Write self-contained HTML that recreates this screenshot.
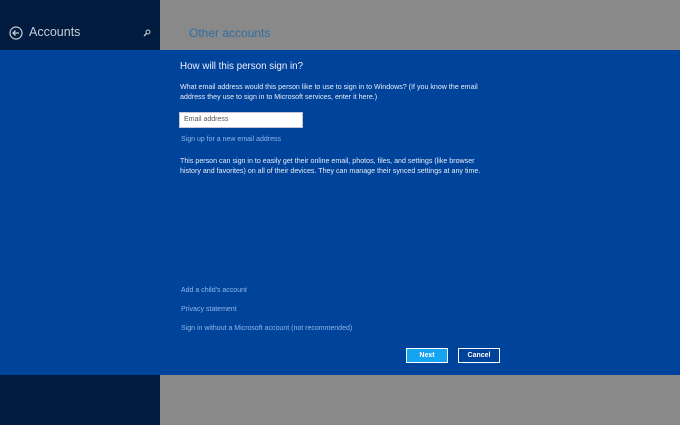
<!DOCTYPE html>
<html><head><style>
*{margin:0;padding:0;box-sizing:border-box}
body{width:680px;height:425px;position:relative;overflow:hidden;background:#898989;font-family:"Liberation Sans",sans-serif}
.nav{position:absolute;left:0;top:0;width:160px;height:425px;background:#011c3e}
.band{position:absolute;left:0;top:50px;width:680px;height:325px;background:#00439a}
.t{position:absolute;white-space:nowrap;color:#fff}
.p{font-size:7.1px;line-height:9.5px;color:#e8eef8}
.l{font-size:7px;color:#8fb6ea}
</style></head><body>
<div class="nav"></div>
<div class="band"></div>
<svg style="position:absolute;left:9px;top:26px" width="14" height="14" viewBox="0 0 14 14"><circle cx="7" cy="7" r="6" fill="none" stroke="#c8ccd4" stroke-width="1.2"/><path d="M10 7H4M6.5 4.5L4 7l2.5 2.5" fill="none" stroke="#c8ccd4" stroke-width="1.3"/></svg>
<div class="t" style="left:29px;top:25px;font-size:12.5px;color:#c8ccd4">Accounts</div>
<svg style="position:absolute;left:143px;top:29px" width="8" height="8" viewBox="0 0 8 8"><circle cx="5" cy="3" r="2" fill="none" stroke="#c8ccd4" stroke-width="1"/><path d="M3.5 4.5L1 7" stroke="#c8ccd4" stroke-width="1.3"/></svg>
<div class="t" style="left:189px;top:26px;font-size:12px;color:#2f6fa6">Other accounts</div>
<div class="t" style="left:180px;top:61px;font-size:9.8px;color:#eef">How will this person sign in?</div>
<div class="t p" style="left:180px;top:83px">What email address would this person like to use to sign in to Windows? (If you know the email<br>address they use to sign in to Microsoft services, enter it here.)</div>
<div style="position:absolute;left:179px;top:112px;width:124px;height:16px;background:#fff;border:1px solid #c0c8d8"></div>
<div class="t" style="left:184px;top:116px;font-size:7px;color:#555">Email address</div>
<div class="t l" style="left:181px;top:136px">Sign up for a new email address</div>
<div class="t p" style="left:180px;top:157px">This person can sign in to easily get their online email, photos, files, and settings (like browser<br>history and favorites) on all of their devices. They can manage their synced settings at any time.</div>
<div class="t l" style="left:181px;top:287px">Add a child's account</div>
<div class="t l" style="left:181px;top:306px">Privacy statement</div>
<div class="t l" style="left:181px;top:325px">Sign in without a Microsoft account (not recommended)</div>
<div style="position:absolute;left:406px;top:348px;width:42px;height:15px;background:#15a4f0;border:1px solid #fff;color:#fff;font-size:7px;font-weight:bold;text-align:center;line-height:13px">Next</div>
<div style="position:absolute;left:458px;top:348px;width:42px;height:15px;background:#00439a;border:1px solid #fff;color:#fff;font-size:7px;font-weight:bold;text-align:center;line-height:13px">Cancel</div>
</body></html>
